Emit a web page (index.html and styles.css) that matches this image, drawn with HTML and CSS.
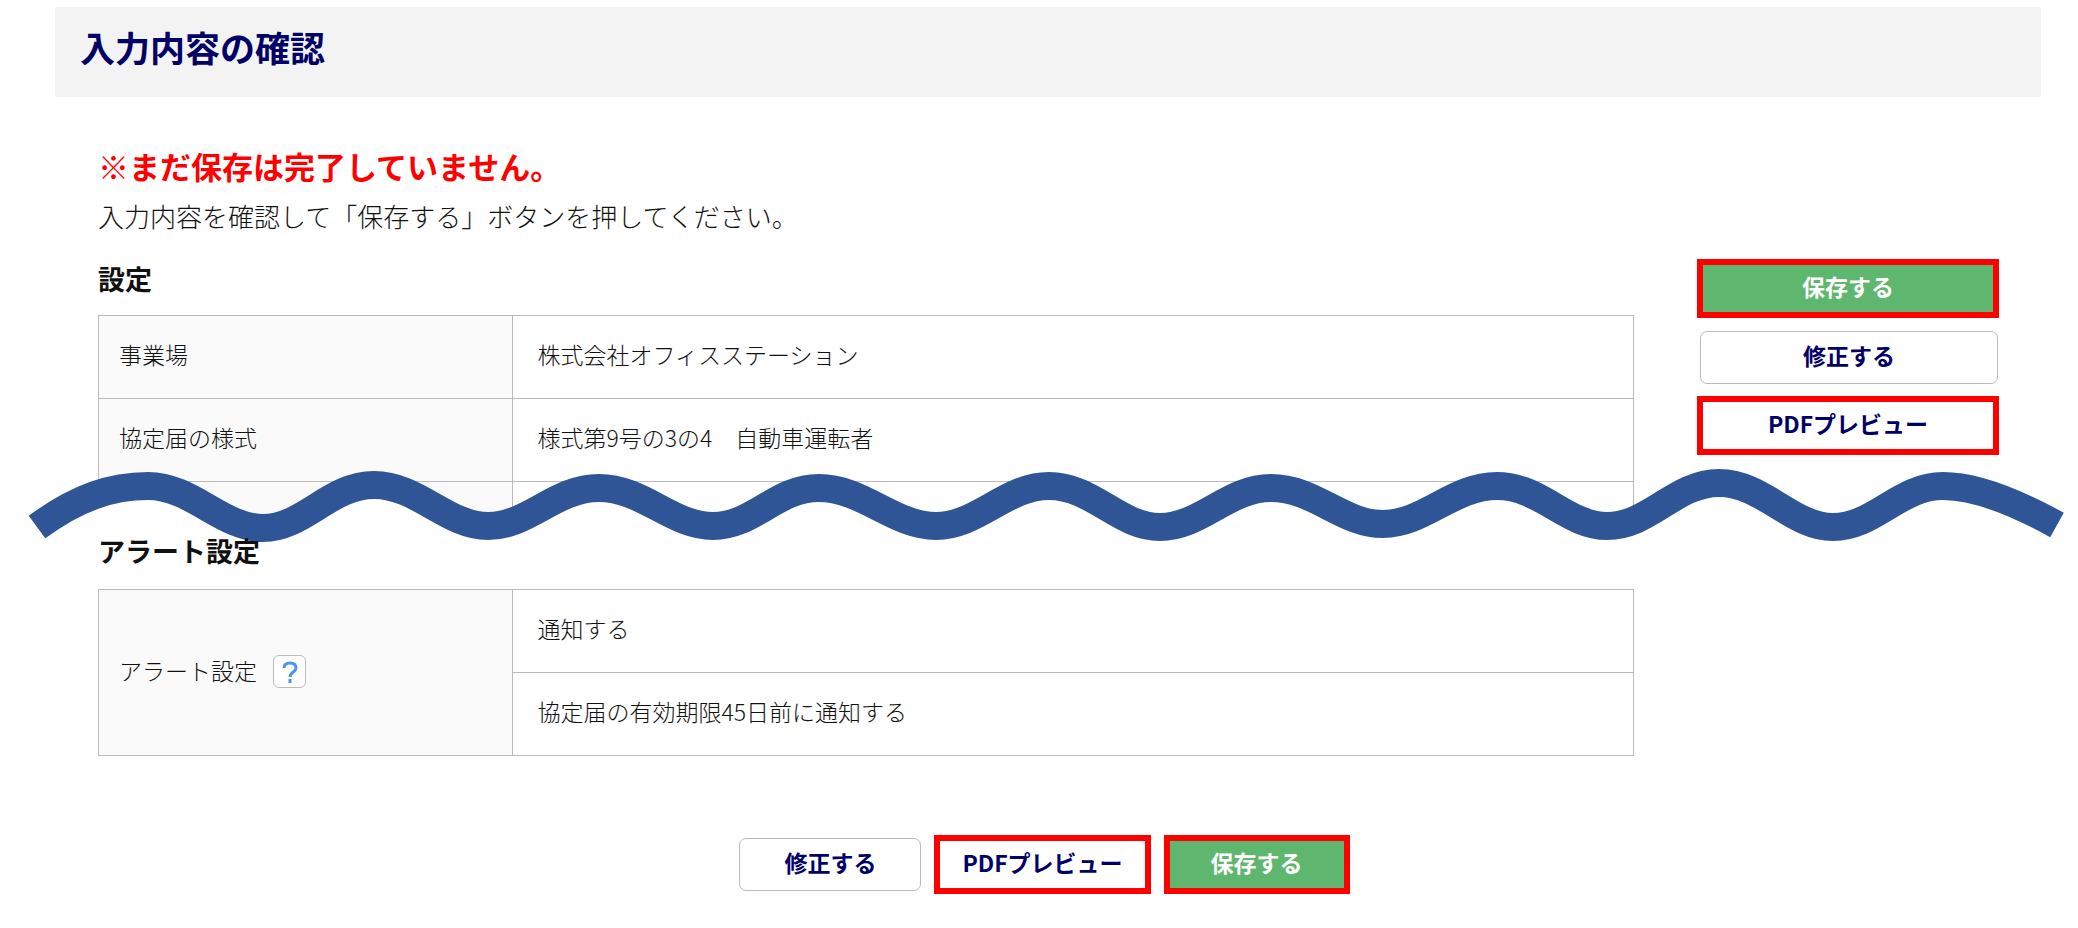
FILE: index.html
```
<!DOCTYPE html>
<html lang="ja">
<head>
  <meta charset="utf-8" />
  <meta name="viewport" content="width=device-width,initial-scale=1" />
  <title>入力内容の確認</title>
  <link rel="stylesheet" href="styles.css">
</head>
<body>
  <div class="page">
    <header class="page-head">
      <h1>入力内容の確認</h1>
    </header>

    <main class="content">
      <p class="warning">※まだ保存は完了していません。</p>
      <p class="lead">入力内容を確認して「保存する」ボタンを押してください。</p>

      <div class="columns">
        <div class="details">
          <h2>設定</h2>
          <table class="sheet">
            <tr><th scope="row">事業場</th><td>株式会社オフィスステーション</td></tr>
            <tr><th scope="row">協定届の様式</th><td>様式第9号の3の4　自動車運転者</td></tr>
            <tr class="cut"><th></th><td></td></tr>
          </table>

          <!-- omitted rows -->
          <svg class="wave" viewBox="0 465 2078 80" preserveAspectRatio="none" aria-hidden="true">
            <path class="wave-mask" d="M38 527C75 502 110 486 148 486C192 486 222 528 263 528C304 528 330 485 374 485C418 485 447 526 488 526C529 526 555 488 599 488C643 488 672 526 713 526C754 526 776 488 819 488C863 488 894 526 936 526C978 526 1006 486 1049 486C1093 486 1119 527 1160 527C1201 527 1228 488 1271 488C1315 488 1342 524 1383 524C1424 524 1453 486 1497 486C1541 486 1567 526 1607 526C1650 526 1675 483 1719 483C1763 483 1792 527 1833 527C1875 527 1899 486 1943 486C1976 486 2016 501 2056 525V540H38Z"/>
            <path class="wave-line" d="M37 527C78 497 112 486 148 486C192 486 222 528 263 528C304 528 330 485 374 485C418 485 447 526 488 526C529 526 555 488 599 488C643 488 672 526 713 526C754 526 776 488 819 488C863 488 894 526 936 526C978 526 1006 486 1049 486C1093 486 1119 527 1160 527C1201 527 1228 488 1271 488C1315 488 1342 524 1383 524C1424 524 1453 486 1497 486C1541 486 1567 526 1607 526C1650 526 1675 483 1719 483C1763 483 1792 527 1833 527C1875 527 1899 486 1943 486C1976 486 2019 504 2057 525"/>
          </svg>

          <h2 class="after-wave">アラート設定</h2>
          <table class="sheet">
            <tr>
              <th scope="row" rowspan="2">
                <div class="label">アラート設定
                  <button type="button" class="help" aria-label="ヘルプ">
                    <svg viewBox="0 0 16 22" width="16" height="22" aria-hidden="true">
                      <path d="M2 7C2 3 5 2 8 2C11 2 14 3 14 7C14 11 8 11 8 16"/>
                      <path d="M8 18V22"/>
                    </svg>
                  </button>
                </div>
              </th>
              <td>通知する</td>
            </tr>
            <tr><td>協定届の有効期限45日前に通知する</td></tr>
          </table>
        </div>

        <aside class="side">
          <button type="button" class="btn save marked">保存する</button>
          <button type="button" class="btn">修正する</button>
          <button type="button" class="btn marked">PDFプレビュー</button>
        </aside>
      </div>

      <div class="actions">
        <button type="button" class="btn">修正する</button>
        <button type="button" class="btn marked">PDFプレビュー</button>
        <button type="button" class="btn save marked">保存する</button>
      </div>
    </main>
  </div>
</body>
</html>
```
FILE: styles.css
```
*{box-sizing:border-box}
body{margin:0;background:#fff;color:#111;font-family:"Noto Sans CJK JP",sans-serif;font-size:23px;font-weight:300}
.page{position:relative;padding:7px 37px 0 55px}
h1,h2,p{margin:0}

.page-head{padding:16px 25px 26px;background:#f3f3f3}
.page-head h1{color:#006;font-size:35px;line-height:48px;font-weight:700}

.content{padding:45px 42px 20px 43px}
.warning{color:#f00;font-size:31px;line-height:48px;font-weight:700}
.lead{margin-top:2px;font-size:26px;line-height:48px}

.columns{display:flex;align-items:flex-start;gap:63px;margin-top:19px}
.details{flex:1}
.details h2{margin-bottom:16px;font-size:27px;line-height:40px;font-weight:700}
.details .after-wave{position:relative;margin:9px 0 18px}

.sheet{width:100%;border-collapse:collapse;table-layout:fixed}
.sheet th,.sheet td{height:83px;padding:0 24px 6px;border:1px solid #bbb;text-align:left;font-weight:300;line-height:32px}
.sheet th{width:27%;padding:0 20px 6px;background:#fafafa}
.sheet .cut th,.sheet .cut td{height:40px}
.label{display:flex;align-items:center;gap:16px}
.help{display:flex;align-items:center;justify-content:center;width:33px;height:33px;margin-top:4px;padding:0;border:1px solid #bbb;border-radius:6px;background:#fff;cursor:pointer}
.help path{fill:none;stroke:#4d94f0;stroke-width:3}

/* wavy cut, spans the whole page */
.wave{position:absolute;left:0;width:100%;height:80px;margin-top:-57px}
.wave-mask{fill:#fff}
.wave-line{fill:none;stroke:#2f5597;stroke-width:28}

.side{display:flex;flex-direction:column;align-items:stretch;width:302px}
.btn{height:53px;padding:0 44px 6px;border:1px solid #bbb;border-radius:7px;background:#fff;color:#006;font:inherit;font-weight:700;cursor:pointer}
.btn.save{background:#5fb66e;color:#fff}
.btn.marked{height:59px;padding:0 22px 6px;border:6px solid #f00;border-radius:0}
.btn.save.marked{padding:0 41px 6px}
.side .btn:not(.marked){margin:13px 1px 12px 3px}

.actions{display:flex;align-items:center;justify-content:center;gap:13px;margin-top:79px;padding-right:8px}
```
